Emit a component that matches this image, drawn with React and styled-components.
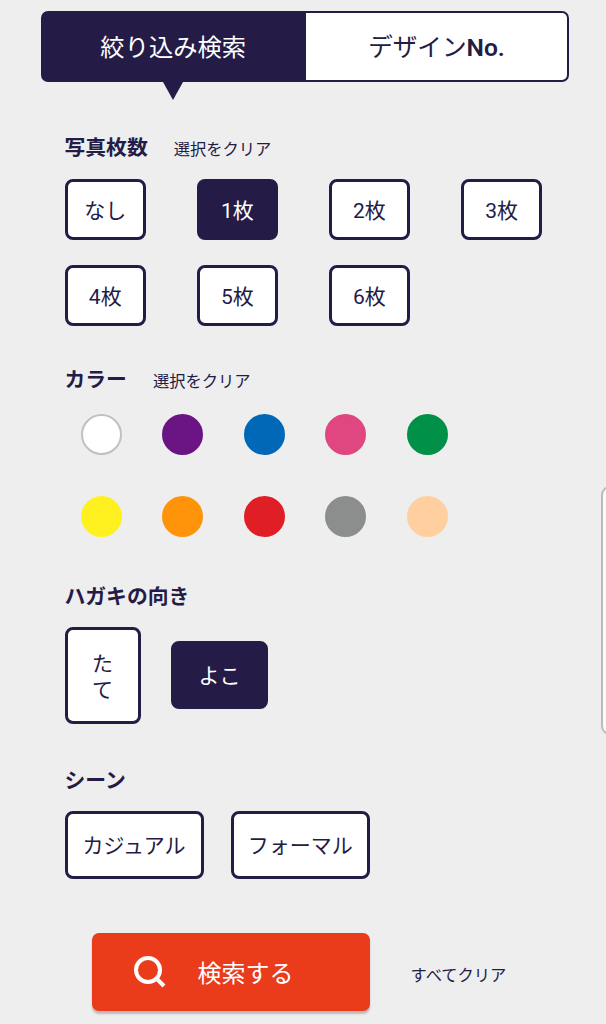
import React, { useState } from "react";
import styled, { createGlobalStyle } from "styled-components";

const photoCounts = ["なし", "1枚", "2枚", "3枚", "4枚", "5枚", "6枚"];

const colors = [
  "#ffffff",
  "#6a1583",
  "#0068b7",
  "#e0467f",
  "#009047",
  "#fff01f",
  "#ff940a",
  "#df1f25",
  "#8c8e8d",
  "#ffcf9f",
];

const scenes = ["カジュアル", "フォーマル"];

const App = () => {
  const [tab, setTab] = useState("filter");
  const [count, setCount] = useState("1枚");
  const [color, setColor] = useState("");
  const [direction, setDirection] = useState("よこ");
  const [scene, setScene] = useState("");

  const clearAll = () => {
    setCount("");
    setColor("");
    setDirection("");
    setScene("");
  };

  return (
    <>
      <GlobalStyle />
      <Page>
        <Tabs>
          <Tab $active={tab === "filter"} onClick={() => setTab("filter")}>
            絞り込み検索
          </Tab>
          <Tab $active={tab === "design"} onClick={() => setTab("design")}>
            <span>
              デザイン<b>No.</b>
            </span>
          </Tab>
        </Tabs>

        <Section $top="51px">
          <SectionHead>
            <Title>写真枚数</Title>
            <ClearBtn onClick={() => setCount("")}>選択をクリア</ClearBtn>
          </SectionHead>
          <CountGrid>
            {photoCounts.map((item) => (
              <Choice key={item} $active={item === count} onClick={() => setCount(item)}>
                {item}
              </Choice>
            ))}
          </CountGrid>
        </Section>

        <Section $top="39px">
          <SectionHead>
            <Title>カラー</Title>
            <ClearBtn onClick={() => setColor("")}>選択をクリア</ClearBtn>
          </SectionHead>
          <ColorGrid>
            {colors.map((item) => (
              <ColorDot key={item} $color={item} $active={item === color} aria-label={item} onClick={() => setColor(item)} />
            ))}
          </ColorGrid>
        </Section>

        <Section $top="45px">
          <SectionHead>
            <Title>ハガキの向き</Title>
          </SectionHead>
          <DirectionRow>
            <Portrait $active={direction === "たて"} onClick={() => setDirection("たて")}>
              た<br />て
            </Portrait>
            <Landscape $active={direction === "よこ"} onClick={() => setDirection("よこ")}>
              よこ
            </Landscape>
          </DirectionRow>
        </Section>

        <Section $top="42px">
          <SectionHead>
            <Title>シーン</Title>
          </SectionHead>
          <SceneRow>
            {scenes.map((item) => (
              <SceneBtn key={item} $active={item === scene} onClick={() => setScene(item)}>
                {item}
              </SceneBtn>
            ))}
          </SceneRow>
        </Section>

        <Footer>
          <SearchBtn>
            <SearchIcon viewBox="0 0 32 32">
              <circle cx="14" cy="14" r="12" />
              <path d="M22.3 22.3 L30 30" />
            </SearchIcon>
            <SearchLabel>検索する</SearchLabel>
          </SearchBtn>
          <ClearAllBtn onClick={clearAll}>すべてクリア</ClearAllBtn>
        </Footer>

        <EdgePanel />
      </Page>
    </>
  );
};

export default App;

const GlobalStyle = createGlobalStyle`
  * {
    box-sizing: border-box;
  }
  body {
    margin: 0;
    background-color: #eeeeee;
  }
  button {
    margin: 0;
    padding: 0;
    border: none;
    background: none;
    color: inherit;
    font: inherit;
    cursor: pointer;
  }
`;

const Page = styled.div`
  position: relative;
  width: 606px;
  height: 1024px;
  padding: 11px 37px 0 40.5px;
  overflow: hidden;
  background-color: #eeeeee;
  color: #241c46;
  font-family: Roboto, "Noto Sans CJK JP", sans-serif;
`;

const Tabs = styled.div`
  display: flex;
  height: 71px;
`;

const Tab = styled.button`
  position: relative;
  flex: 0 0 265.5px;
  padding-top: 2px;
  border: 2px solid #241c46;
  background-color: ${(props) => (props.$active ? "#241c46" : "#fff")};
  color: ${(props) => (props.$active ? "#fff" : "#241c46")};
  font-size: 24.3px;
  line-height: 36px;

  &:first-child {
    border-radius: 7px 0 0 7px;
  }
  &:last-child {
    flex-basis: 263px;
    border-left: none;
    border-radius: 0 7px 7px 0;
    font-size: 24.6px;
  }
  b {
    font-weight: 600;
  }
  /* pointer under the open tab */
  &::after {
    content: "";
    display: ${(props) => (props.$active ? "block" : "none")};
    position: absolute;
    top: 69px;
    left: 50%;
    transform: translateX(-50%);
    border: solid transparent;
    border-width: 18px 10.5px 0;
    border-top-color: #241c46;
  }
`;

const Section = styled.section`
  margin-top: ${(props) => props.$top};
  padding-left: 24px;
`;

const SectionHead = styled.div`
  display: flex;
  align-items: center;
  gap: 26px;
  height: 30px;
`;

const Title = styled.h2`
  margin: 0;
  font-size: 20.8px;
  line-height: 30px;
  font-weight: 700;
`;

const ClearBtn = styled.button`
  padding-top: 3px;
  font-size: 16.3px;
  line-height: 24px;
`;

const ClearAllBtn = styled(ClearBtn)`
  padding-top: 8px;
`;

const Choice = styled.button`
  display: flex;
  align-items: center;
  justify-content: center;
  height: 61px;
  padding-top: 2px;
  border: 3px solid #241c46;
  border-radius: 8px;
  background-color: ${(props) => (props.$active ? "#241c46" : "#fff")};
  color: ${(props) => (props.$active ? "#fff" : "#241c46")};
  font-size: 21px;
  line-height: 30px;
`;

const CountGrid = styled.div`
  display: grid;
  grid-template-columns: repeat(4, 81.5px);
  gap: 25.3px 50.6px;
  padding-top: 16px;
`;

const ColorGrid = styled.div`
  display: grid;
  grid-template-columns: repeat(5, 41px);
  gap: 40.4px;
  padding: 19px 0 0 16.5px;
`;

const ColorDot = styled.button`
  height: 41px;
  border-radius: 50%;
  border: 2px solid ${(props) => (props.$color === "#ffffff" ? "#c0c0c0" : props.$color)};
  background-color: ${(props) => props.$color};
  box-shadow: ${(props) => (props.$active ? "0 0 0 3px #241c46" : "none")};
`;

const DirectionRow = styled.div`
  display: flex;
  align-items: center;
  gap: 30.5px;
  padding-top: 15px;
`;

const Portrait = styled(Choice)`
  width: 76px;
  height: 97px;
  padding-top: 3px;
  line-height: 26px;
`;

const Landscape = styled(Choice)`
  width: 97px;
  height: 68px;
`;

const SceneRow = styled.div`
  display: flex;
  gap: 27.2px;
  padding-top: 15.5px;
`;

const SceneBtn = styled(Choice)`
  width: 139px;
  height: 68px;
`;

const Footer = styled.div`
  display: flex;
  align-items: center;
  gap: 41px;
  margin-top: 54px;
  padding-left: 51px;
`;

const SearchBtn = styled.button`
  display: flex;
  align-items: center;
  gap: 32px;
  width: 278px;
  height: 78px;
  padding-left: 42px;
  border-radius: 7px;
  background-color: #ea3b1b;
  box-shadow: 0 3px 2px rgba(70, 50, 50, 0.28);
  color: #fff;
  font-size: 24px;
  line-height: 36px;
`;

const SearchLabel = styled.span`
  padding-top: 3px;
`;

const SearchIcon = styled.svg`
  width: 32px;
  height: 32px;
  fill: none;
  stroke: #fff;
  stroke-width: 4;
`;

/* handle of the drawer that stays off screen */
const EdgePanel = styled.div`
  position: absolute;
  top: 486px;
  left: 601px;
  width: 30px;
  height: 249px;
  border: 2px solid #bcbcbc;
  border-radius: 9px;
  background-color: #fbfbfb;
`;
